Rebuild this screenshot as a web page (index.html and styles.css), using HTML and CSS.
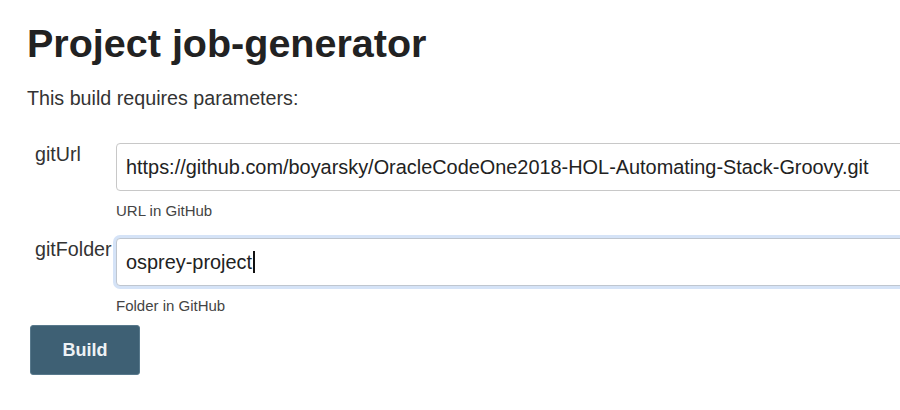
FILE: index.html
```html
<!DOCTYPE html>
<html lang="en">
<head>
<meta charset="utf-8">
<title>Project job-generator</title>
<link rel="stylesheet" href="styles.css">
</head>
<body>
<div class="page">
  <h1 class="title">Project job-generator</h1>
  <p class="intro">This build requires parameters:</p>
  <div class="params">
    <div class="row">
      <div class="label">gitUrl</div>
      <div class="field">
        <div class="input">https://github.com/boyarsky/OracleCodeOne2018-HOL-Automating-Stack-Groovy.git</div>
        <div class="desc">URL in GitHub</div>
      </div>
    </div>
    <div class="row">
      <div class="label">gitFolder</div>
      <div class="field">
        <div class="input focused">osprey-project<span class="caret"></span></div>
        <div class="desc">Folder in GitHub</div>
      </div>
    </div>
  </div>
  <button class="build">Build</button>
</div>
</body>
</html>
```

FILE: styles.css
```css
html, body {
  margin: 0;
  padding: 0;
  background: #fff;
  overflow: hidden;
}
body {
  font-family: "Liberation Sans", Arial, Helvetica, sans-serif;
  color: #333;
}
.page {
  padding: 24px 0 0 27px;
}
.title {
  margin: 0;
  font-size: 39.5px;
  line-height: 39px;
  font-weight: bold;
  color: #222;
}
.intro {
  margin: 22px 0 0 0;
  font-size: 19.7px;
  line-height: 27px;
  color: #333;
}
.params {
  margin-top: 29px;
  display: flex;
  flex-direction: column;
  gap: 15px;
}
.row {
  display: grid;
  grid-template-columns: 89px 800px;
  align-items: start;
}
.label {
  padding-left: 8px;
  font-size: 19.7px;
  line-height: 27px;
  color: #333;
  white-space: nowrap;
}
.field {
  display: flex;
  flex-direction: column;
}
.input {
  margin-top: 2px;
  box-sizing: border-box;
  height: 48px;
  border: 1px solid #c8c8c8;
  border-radius: 4px;
  padding: 0 10px 0 9px;
  display: flex;
  align-items: center;
  font-size: 19.9px;
  color: #222;
  white-space: nowrap;
  background: #fff;
}
.input.focused {
  border-color: #bfc6cf;
  box-shadow: 0 0 0 3px #d5e3f7;
}
.caret {
  display: inline-block;
  width: 1.5px;
  height: 22px;
  background: #111;
  margin-left: 1px;
}
.desc {
  margin-top: 10px;
  font-size: 15px;
  line-height: 20px;
  color: #444;
}
.build {
  margin: 9px 0 0 3px;
  width: 110px;
  height: 50px;
  box-sizing: border-box;
  background: #3e6074;
  border: 1px solid #58798c;
  border-radius: 3px;
  color: #eef2f5;
  font-family: "Liberation Sans", Arial, Helvetica, sans-serif;
  font-weight: bold;
  font-size: 18px;
  padding: 0;
}
```
